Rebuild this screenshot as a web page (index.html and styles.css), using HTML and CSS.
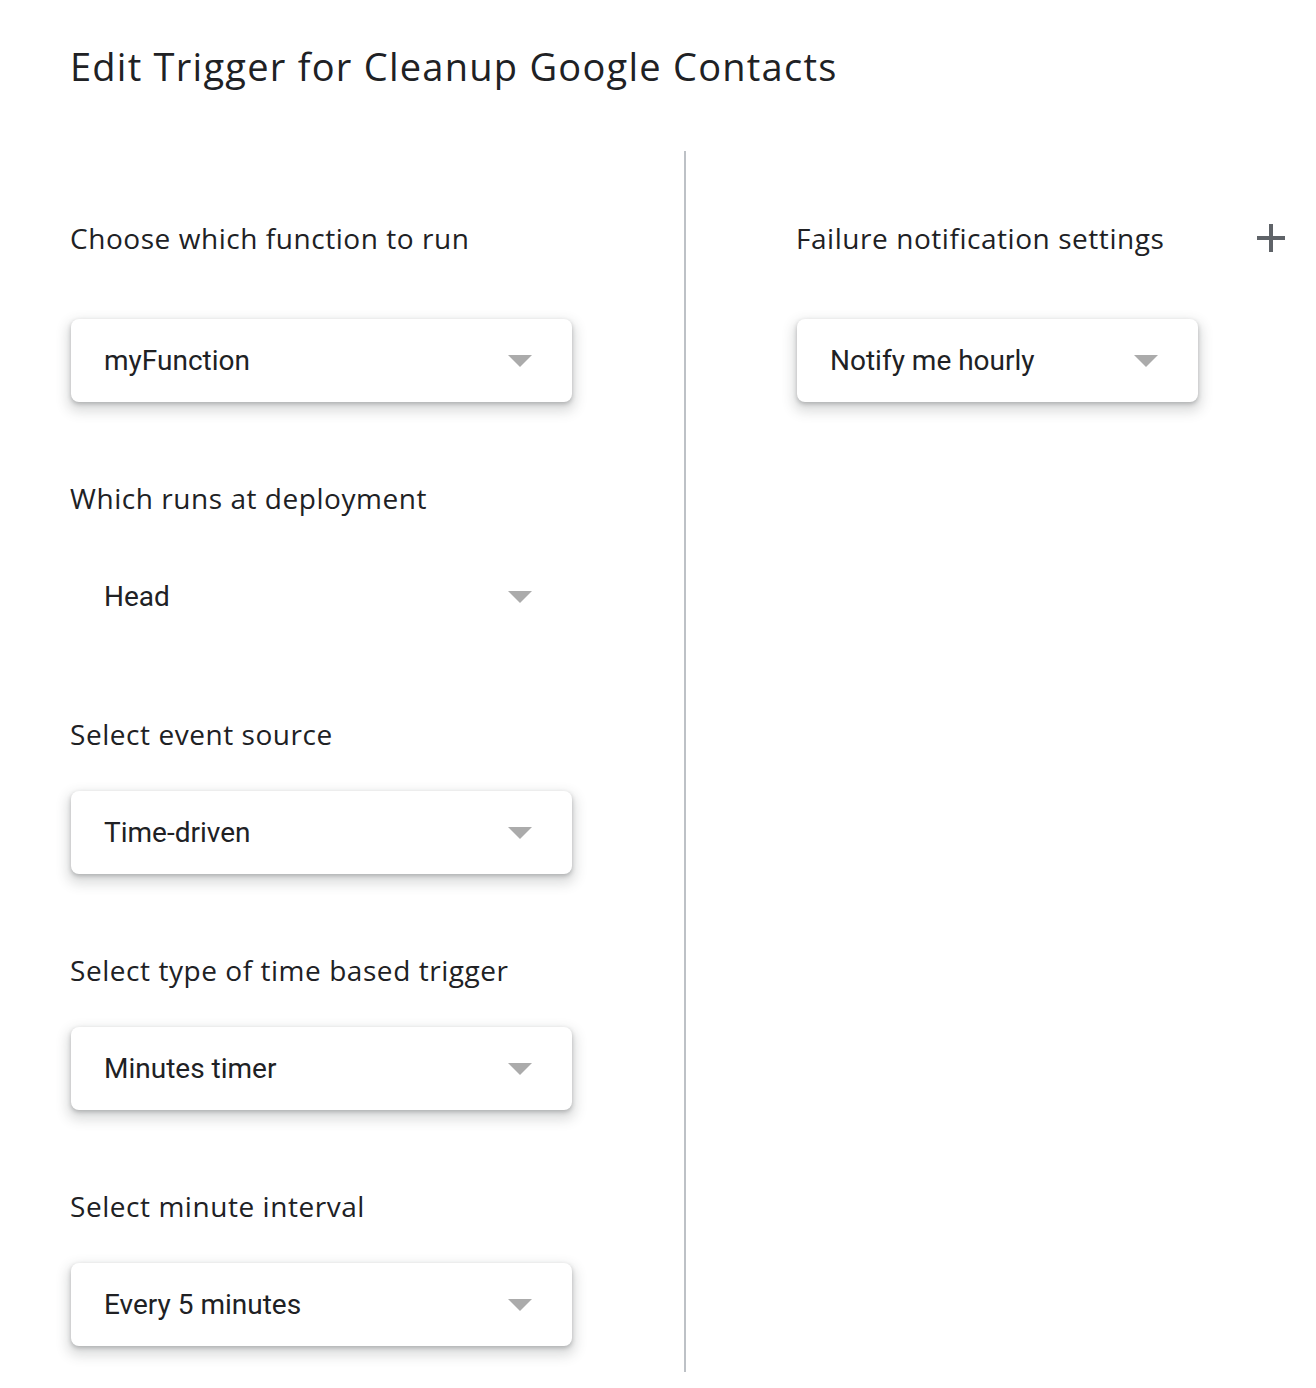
FILE: index.html
```html
<!DOCTYPE html>
<html lang="en">
<head>
<meta charset="utf-8">
<title>Edit Trigger</title>
<link rel="stylesheet" href="styles.css">
</head>
<body>
<div class="page">
  <h1 class="title">Edit Trigger for Cleanup Google Contacts</h1>
  <div class="columns">
    <div class="col col-left">
      <div class="field first">
        <div class="label">Choose which function to run</div>
        <div class="select"><span class="value">myFunction</span><span class="caret"></span></div>
      </div>
      <div class="field">
        <div class="label">Which runs at deployment</div>
        <div class="select flat"><span class="value">Head</span><span class="caret"></span></div>
      </div>
      <div class="field">
        <div class="label">Select event source</div>
        <div class="select"><span class="value">Time-driven</span><span class="caret"></span></div>
      </div>
      <div class="field">
        <div class="label">Select type of time based trigger</div>
        <div class="select"><span class="value">Minutes timer</span><span class="caret"></span></div>
      </div>
      <div class="field">
        <div class="label">Select minute interval</div>
        <div class="select"><span class="value">Every 5 minutes</span><span class="caret"></span></div>
      </div>
    </div>
    <div class="divider"></div>
    <div class="col col-right">
      <div class="field first">
        <div class="label-row">
          <div class="label">Failure notification settings</div>
          <svg class="plus" width="28" height="28" viewBox="0 0 28 28" aria-hidden="true">
            <path d="M14 0v28M0 14h28" stroke="#5f6368" stroke-width="4" fill="none"/>
          </svg>
        </div>
        <div class="select narrow"><span class="value">Notify me hourly</span><span class="caret"></span></div>
      </div>
    </div>
  </div>
</div>
</body>
</html>
```

FILE: styles.css
```css
html, body {
  margin: 0;
  padding: 0;
  background: #ffffff;
}

.page {
  padding: 44px 0 0 70px;
  color: #202124;
  font-family: "Open Sans", "Noto Sans", sans-serif;
}

.title {
  margin: 0;
  font-size: 38px;
  line-height: 44px;
  font-weight: 400;
  letter-spacing: 1.25px;
  color: #202124;
}

.columns {
  display: flex;
  margin-top: 63px;
}

.col {
  display: flex;
  flex-direction: column;
  padding-top: 69px;
}

.col-left {
  width: 614px;
  padding-bottom: 26px;
}

.divider {
  width: 2px;
  background: #bdc1c6;
}

.col-right {
  flex: 1;
  padding-left: 110px;
  padding-right: 31px;
}

.field {
  display: flex;
  flex-direction: column;
}

.field + .field {
  margin-top: 78px;
}

.label {
  font-size: 28px;
  line-height: 36px;
  letter-spacing: 0.55px;
  color: #202124;
  white-space: nowrap;
}

.label-row {
  display: flex;
  align-items: center;
  justify-content: space-between;
}

.plus {
  display: block;
}

.select {
  margin-top: 39px;
  width: 501px;
  height: 83px;
  box-sizing: border-box;
  padding: 0 40px 0 33px;
  display: flex;
  align-items: center;
  justify-content: space-between;
  background: #ffffff;
  border-radius: 8px;
  box-shadow: 0 2px 4px rgba(60, 64, 67, 0.3), 0 6px 12px 4px rgba(60, 64, 67, 0.17);
  font-family: Roboto, "Liberation Sans", sans-serif;
  font-size: 28px;
  color: #202124;
}

.field.first .select {
  margin-top: 63px;
}

.select.flat {
  box-shadow: none;
  background: transparent;
}

.select.narrow {
  width: 401px;
  margin-left: 1px;
}

.col-left .select {
  margin-left: 1px;
}

.caret {
  width: 0;
  height: 0;
  border-left: 12px solid transparent;
  border-right: 12px solid transparent;
  border-top: 12px solid #ababab;
}
```
